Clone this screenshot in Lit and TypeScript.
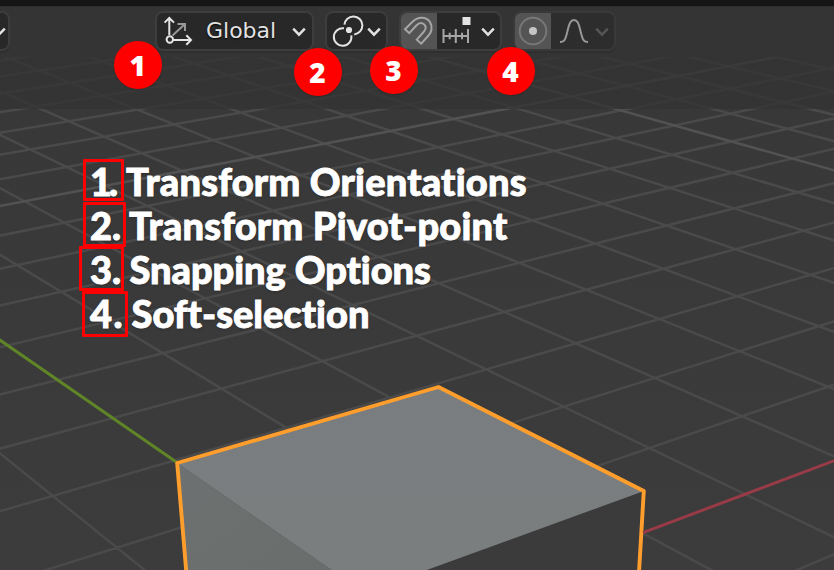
import { LitElement, html, css, svg } from "lit";
import { customElement } from "lit/decorators.js";

/* Perspective projection of the ground plane (grid units) to the viewport. */
function project(u: number, v: number): [number, number] {
  const w = 0.04856 * u + 0.06722 * v + 1;
  return [
    (148.59585 * u - 66.18127 * v + 407.94942) / w,
    (-18.50805 * u - 22.8787 * v + 621.96363) / w,
  ];
}

function segment(a: [number, number], b: [number, number]) {
  return `M${a[0].toFixed(1)} ${a[1].toFixed(1)}L${b[0].toFixed(1)} ${b[1].toFixed(1)}`;
}

function gridPath(major: boolean) {
  let d = "";
  for (let i = -8; i <= 45; i++) {
    if (i === 0 || (i % 10 === 0) !== major) continue;
    d += segment(project(i, -6), project(i, 60));
    if (i >= -6) d += segment(project(-8, i), project(60, i));
  }
  return d;
}

@customElement("scene-view")
class SceneView extends LitElement {
  static styles = css`
    :host { display: block; }
    svg { display: block; width: 834px; height: 570px; }
    .bg { fill: url(#shade); }
    .grid { fill: none; stroke: #4a4a4a; stroke-width: 2.5; }
    .major { fill: none; stroke: #525252; stroke-width: 2.5; }
    .veil { fill: #333333; fill-opacity: 0.75; }
    .bar { fill: #343434; }
    .green { stroke: #5f8527; stroke-width: 3; }
    .red { stroke: #973b47; stroke-width: 3; }
    .top { fill: url(#topface); }
    .left { fill: url(#leftface); }
    .right { fill: #3b3b3b; }
    .outline { fill: none; stroke: #ff9e2c; stroke-width: 3.9; stroke-linejoin: round; }
  `;
  render() {
    return html`<svg viewBox="0 0 834 570">
      <defs>
        <linearGradient id="shade" x1="0" y1="0" x2="0" y2="1">
          <stop offset="0" stop-color="#373737" />
          <stop offset="1" stop-color="#3c3c3c" />
        </linearGradient>
        <linearGradient id="topface" x1="0" y1="0" x2="0" y2="1">
          <stop offset="0" stop-color="#797d80" />
          <stop offset="1" stop-color="#7a7e7e" />
        </linearGradient>
        <linearGradient id="leftface" x1="0" y1="0" x2="1" y2="1">
          <stop offset="0" stop-color="#6d7171" />
          <stop offset="1" stop-color="#696d6b" />
        </linearGradient>
      </defs>
      <rect class="bg" width="834" height="570" />
      <path class="grid" d=${gridPath(false)} />
      <path class="major" d=${gridPath(true)} />
      <rect class="veil" width="834" height="109" />
      <rect class="bar" width="834" height="57" />
      <line class="green" x1="-4" y1="337.3" x2="177" y2="462.5" />
      <path class="right" d="M331 571L426 571L644 491L639 571Z" />
      <path class="left" d="M177 463L333 571L186 571Z" />
      <path class="top" d="M177 463L438 387L644 491L424 571L333 571Z" />
      <path class="outline" d="M186.3 572L177.2 463L438.5 387L643.8 491L639 572" />
      <line class="red" x1="643" y1="532.6" x2="836" y2="460" />
    </svg>`;
  }
}

const chevron = svg`<path class="chev" d="M1.2 2.6L7 8.6L12.8 2.6" />`;

@customElement("tool-header")
class ToolHeader extends LitElement {
  static styles = css`
    :host { display: block; }
    .strip { height: 6px; background: #161616; border-bottom: 1px solid #2c2c2c; }
    .tools { display: flex; height: 50px; align-items: flex-start; padding-top: 4px; box-sizing: border-box; }
    .btn { display: flex; align-items: center; box-sizing: border-box; height: 40px; flex: none;
      border: 2px solid #3d3d3d; border-radius: 8px; background: #282828; overflow: hidden;
      box-shadow: 0 2px 0 #2f2f2f; }
    .cut { width: 20px; margin-left: -10.5px; margin-right: 145px; justify-content: flex-start; }
    .global { width: 159px; padding-left: 6.5px; margin-right: 11.5px; }
    .pivot { width: 63px; padding-left: 4.5px; margin-right: 10.5px; }
    .snap { width: 103px; margin-right: 11px; }
    .soft { width: 103px; background: #2d2d2d; border-color: #393939; }
    .on { display: flex; align-items: center; justify-content: center; width: 36.5px; height: 36px; background: #545454; }
    .label { font: 22px/36px "DejaVu Sans", sans-serif; color: #e2e2e2; text-shadow: 0 1px 2px #000;
      width: 86px; margin-left: 11px; margin-top: -1px; }
    svg { display: block; flex: none; overflow: visible; fill: none; stroke: #e4e4e4; stroke-width: 2; }
    .chev { stroke: #e2e2e2; stroke-width: 2.5; }
    .dim { stroke: #989898; }
    .fade .chev { stroke: #555; }
    .solid { fill: #e4e4e4; stroke: none; }
    .grey { fill: #c4c4c4; stroke: none; }
    .ring { stroke: #777; }
    .mid { stroke: #a6a6a6; }
  `;
  render() {
    return html`
      <div class="strip"></div>
      <div class="tools">
        <div class="btn cut"><svg width="14" height="10">${chevron}</svg></div>
        <div class="btn global">
          <svg width="32" height="36" viewBox="163 13 32 36">
            <path class="dim" d="M172.5 35.5L184.5 24.5M177.5 24H185V31" />
            <path d="M169.3 35V19M164.6 22.6L169.3 18L174 22.6M173 40H190.5M186.3 35.3L191 40L186.3 44.7" />
            <circle cx="169.8" cy="39.5" r="3.2" />
          </svg>
          <span class="label">Global</span>
          <svg width="14" height="10">${chevron}</svg>
        </div>
        <div class="btn pivot">
          <svg width="35.5" height="36" viewBox="332 13 35.5 36">
            <path d="M344.4 24.6A9 9 0 1 1 354.2 34.4" />
            <path d="M344 28.3A8.8 8.8 0 1 0 351.3 35.4" />
            <circle class="solid" cx="349" cy="30" r="3.1" />
          </svg>
          <svg width="14" height="10">${chevron}</svg>
        </div>
        <div class="btn snap">
          <div class="on">
            <svg width="36" height="36" viewBox="401 13 36 36">
              <path class="mid" d="M405 29.2L412 22.2C419 15.2 427 17.5 430 22C433 27 431.5 32.5 428.5 35.5L421.2 43.7L416.8 39.7L423.6 32C426 29.5 426.5 26.5 424 24.3C421.5 22.2 418.5 23.2 416.3 25.5L409.3 33.2Z" />
            </svg>
          </div>
          <svg width="44" height="36" viewBox="437.5 13 44 36">
            <path class="mid" d="M444 29V43M456.3 29V43M468.5 29V43M444 36H468.5M450.2 32.7V39.3M462.5 32.7V39.3" />
            <rect class="solid" x="463" y="17" width="8" height="8" />
          </svg>
          <svg width="14" height="10">${chevron}</svg>
        </div>
        <div class="btn soft">
          <div class="on">
            <svg width="36" height="36" viewBox="514 13 36 36">
              <circle class="ring" cx="532" cy="31" r="13.3" />
              <circle class="grey" cx="532" cy="31" r="4" />
            </svg>
          </div>
          <svg class="fade" width="44" height="36" viewBox="551 13 44 36">
            <path class="dim" d="M560 42C564.5 42 565.5 39.5 567.5 31C569.5 22.5 571 20 574 20C577 20 578.5 22.5 580.5 31C582.5 39.5 583.5 42 588 42" />
          </svg>
          <svg class="fade" width="14" height="10">${chevron}</svg>
        </div>
      </div>
    `;
  }
}

@customElement("app-root")
class AppRoot extends LitElement {
  static styles = css`
    :host { display: block; position: relative; width: 834px; height: 570px; overflow: hidden; background: #3a3a3a; }
    scene-view { position: absolute; left: 0; top: 0; }
    tool-header { position: relative; }
    .badge { position: absolute; width: 48px; height: 48px; border-radius: 50%; background: #fe0000; color: #fff;
      font: 900 28px/48px "Noto Sans", sans-serif; text-align: center; box-shadow: 0 1px 2px rgba(0, 0, 0, 0.15); }
    .b1 { left: 113.6px; top: 41.3px; }
    .b2 { left: 293.5px; top: 48.3px; }
    .b3 { left: 369.5px; top: 45.5px; }
    .b4 { left: 486.5px; top: 46.5px; }
    .notes { position: relative; margin: 102px 0 0 90px; padding: 0; list-style: none; color: #fff;
      font: 900 38px/44px Lato, sans-serif; font-variant-ligatures: none; white-space: nowrap;
      -webkit-text-stroke: 0.9px #fff; }
    .row { display: flex; height: 44px; text-shadow: 0 1px 3px rgba(0, 0, 0, 0.3); }
    .num { width: 36px; flex: none; }
    .r1 .text, .r2 .text { letter-spacing: 0.2px; }
    .r3 .text { letter-spacing: -0.05px; }
    .r1 .num { letter-spacing: -3px; }
    .r2 .num { width: 39px; }
    .r3 .num { width: 39.5px; }
    .r4 .num { width: 41.5px; letter-spacing: 1.5px; }
    .frame { position: absolute; box-sizing: border-box; border: 3px solid #fe0000; border-radius: 1px; }
    .f1 { left: 83px; top: 159px; width: 41px; height: 42px; }
    .f2 { left: 83px; top: 202px; width: 43px; height: 45px; }
    .f3 { left: 79px; top: 246px; width: 45px; height: 45px; }
    .f4 { left: 82px; top: 291px; width: 46px; height: 46px; }
  `;
  render() {
    const notes = ["Transform Orientations", "Transform Pivot-point", "Snapping Options", "Soft-selection"];
    return html`
      <scene-view></scene-view>
      <tool-header></tool-header>
      <ul class="notes">
        ${notes.map((t, i) => html`<li class="row r${i + 1}"><span class="num">${i + 1}.</span><span class="text">${t}</span></li>`)}
      </ul>
      ${notes.map((_, i) => html`<div class="frame f${i + 1}"></div><div class="badge b${i + 1}">${i + 1}</div>`)}
    `;
  }
}
